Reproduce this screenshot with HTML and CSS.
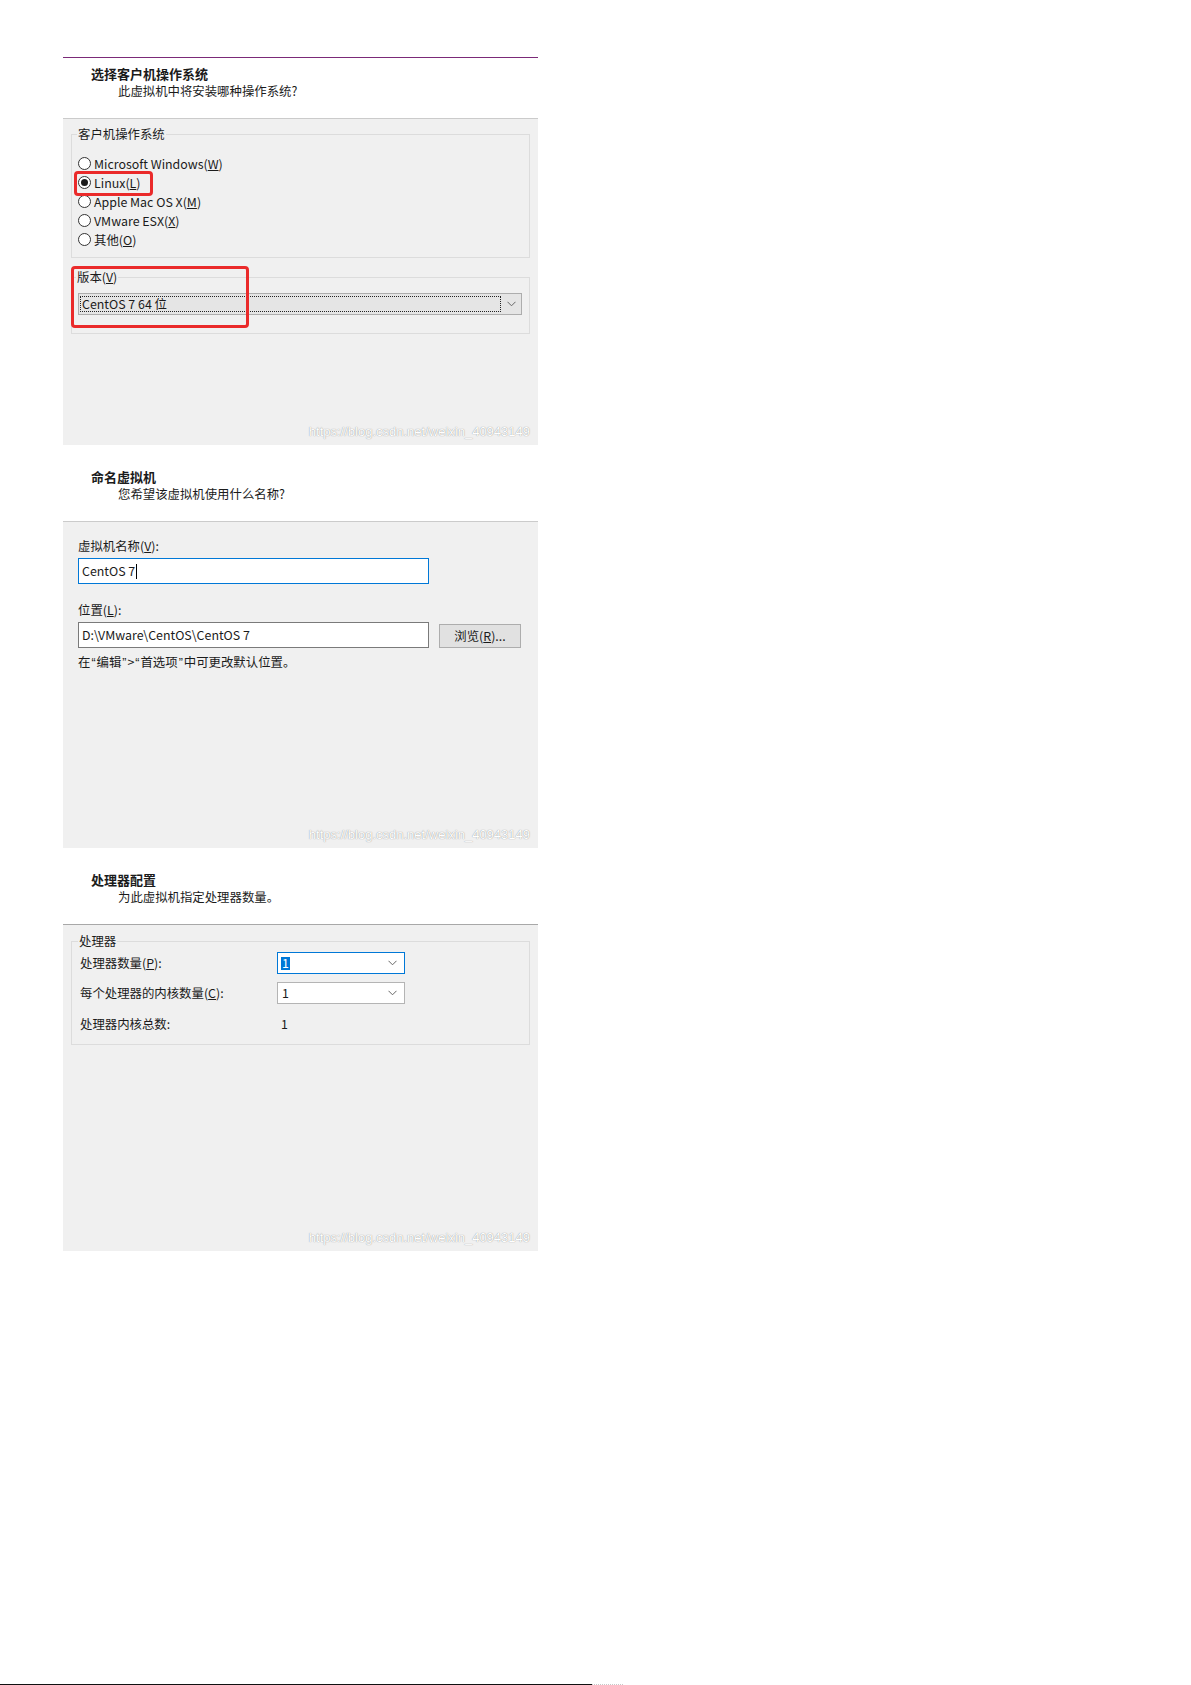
FILE: index.html
```html
<!DOCTYPE html>
<html>
    <head>
        <meta charset="utf-8">
        <meta name="viewport" content="width=device-width, initial-scale=1">
        <title>新建虚拟机向导</title>
        <link rel="stylesheet" href="styles.css">
    </head>
    <body>
        <div class="wizard">
            <!-- step 1: guest os -->
            <div class="head head-first">
                <h2>选择客户机操作系统</h2>
                <p>此虚拟机中将安装哪种操作系统?</p>
            </div>
            <div class="panel">
                <fieldset class="group os-group">
                    <legend>客户机操作系统</legend>
                    <label class="opt"><span class="radio"></span>Microsoft Windows(<u>W</u>)</label>
                    <label class="opt opt-marked"><span class="radio on"></span>Linux(<u>L</u>)<span class="mark mark-linux"></span></label>
                    <label class="opt"><span class="radio"></span>Apple Mac OS X(<u>M</u>)</label>
                    <label class="opt"><span class="radio"></span>VMware ESX(<u>X</u>)</label>
                    <label class="opt"><span class="radio"></span>其他(<u>O</u>)</label>
                </fieldset>
                <fieldset class="group version-group">
                    <legend>版本(<u>V</u>)<span class="mark mark-version"></span></legend>
                    <div class="combo">
                        <span class="combo-text">CentOS 7 64 位</span>
                        <span class="combo-arrow">
                            <svg width="9" height="6" viewBox="0 0 9 6"><path d="M0.5 0.8 L4.5 4.8 L8.5 0.8" fill="none" stroke="#666" stroke-width="1"/></svg>
                        </span>
                    </div>
                </fieldset>
                <div class="watermark">https://blog.csdn.net/weixin_40943149</div>
            </div>

            <!-- step 2: name -->
            <div class="head">
                <h2>命名虚拟机</h2>
                <p>您希望该虚拟机使用什么名称?</p>
            </div>
            <div class="panel panel-name">
                <div class="field-label">虚拟机名称(<u>V</u>):</div>
                <div class="textbox focus">CentOS 7<span class="caret"></span></div>
                <div class="field-label gap">位置(<u>L</u>):</div>
                <div class="path-row">
                    <div class="textbox">D:\VMware\CentOS\CentOS 7</div>
                    <button class="btn">浏览(<u>R</u>)...</button>
                </div>
                <div class="hint">在<span class="q">“</span>编辑<span class="q">”</span>&gt;<span class="q">“</span>首选项<span class="q">”</span>中可更改默认位置。</div>
                <div class="watermark">https://blog.csdn.net/weixin_40943149</div>
            </div>

            <!-- step 3: cpu -->
            <div class="head">
                <h2>处理器配置</h2>
                <p>为此虚拟机指定处理器数量。</p>
            </div>
            <div class="panel panel-cpu">
                <fieldset class="group cpu-group">
                    <legend>处理器</legend>
                    <div class="cpu-grid">
                        <span class="cpu-label">处理器数量(<u>P</u>):</span>
                        <div class="dropdown focus">
                            <span class="sel">1</span>
                            <svg width="9" height="6" viewBox="0 0 9 6"><path d="M0.5 0.8 L4.5 4.8 L8.5 0.8" fill="none" stroke="#666" stroke-width="1"/></svg>
                        </div>
                        <span class="cpu-label">每个处理器的内核数量(<u>C</u>):</span>
                        <div class="dropdown">
                            <span>1</span>
                            <svg width="9" height="6" viewBox="0 0 9 6"><path d="M0.5 0.8 L4.5 4.8 L8.5 0.8" fill="none" stroke="#666" stroke-width="1"/></svg>
                        </div>
                        <span class="cpu-label last">处理器内核总数:</span>
                        <span class="cpu-value last">1</span>
                    </div>
                </fieldset>
                <div class="watermark">https://blog.csdn.net/weixin_40943149</div>
            </div>
        </div>

        <div class="footer">
            <span class="footer-solid"></span>
            <span class="footer-dots"></span>
        </div>
    </body>
</html>
```

FILE: styles.css
```css
body {
    margin: 0;
    background-color: #fff;
    font-family: "Noto Sans CJK SC", "Noto Sans", sans-serif;
    font-size: 12.4px;
    color: #1b1b1b;
}

.wizard {
    width: 475px;
    margin: 57px 0 0 63px;
}

/* white header above each page of the wizard */
.head {
    height: 76px;
    box-sizing: border-box;
    padding: 23px 0 0 28px;
    background-color: #fff;
}

.head-first {
    height: 61px;
    padding-top: 7px;
    border-top: 1px solid #7b2a78;
}

.head h2 {
    margin: 0;
    font-size: 13px;
    font-weight: 700;
    line-height: 17px;
}

.head p {
    margin: 1px 0 0 27px;
    line-height: 17px;
}

.panel {
    height: 327px;
    box-sizing: border-box;
    display: flex;
    flex-direction: column;
    padding: 5px 8px 0 8px;
    background-color: #f0f0f0;
    border-top: 1px solid #cbcbcb;
}

.panel-name {
    padding: 16px 8px 0 15px;
}

.panel-cpu {
    padding-top: 6px;
    border-top-color: #a8a8a8;
}

/* group boxes */
.group {
    margin: 0;
    border: 1px solid #dcdcdc;
    border-radius: 0;
    min-width: 0;
}

.group legend {
    padding: 0 1px;
    line-height: 20px;
}

.os-group {
    padding: 10px 7px 8px 6px;
}

.os-group legend {
    margin-left: -1px;
}

.version-group {
    margin-top: 9px;
    padding: 6px 7px 18px 6px;
}

.version-group legend {
    position: relative;
    margin-left: -2px;
}

.cpu-group {
    padding: 1px 7px 11px 6px;
}

/* radio buttons */
.opt {
    display: flex;
    align-items: center;
    height: 19px;
}

.opt-marked {
    position: relative;
}

.radio {
    width: 13px;
    height: 13px;
    box-sizing: border-box;
    margin-right: 3px;
    border: 1px solid #333;
    border-radius: 50%;
    background-color: #fff;
    display: flex;
    align-items: center;
    justify-content: center;
}

.radio.on::after {
    content: "";
    width: 7px;
    height: 7px;
    border-radius: 50%;
    background-color: #1b1b1b;
}

/* red annotation boxes */
.mark {
    position: absolute;
    box-sizing: border-box;
    border: 3px solid #ea2a2a;
    border-radius: 4px;
}

.mark-linux {
    left: -4px;
    top: -2px;
    width: 79px;
    height: 25px;
}

.mark-version {
    left: -5.5px;
    top: -1.5px;
    width: 178px;
    height: 62px;
}

/* combo box */
.combo {
    height: 22px;
    box-sizing: border-box;
    display: flex;
    border: 1px solid #adadad;
    background-color: #e5e5e5;
}

.combo-text {
    flex: 1;
    margin: 2px 0 2px 1px;
    padding-left: 1px;
    border: 1px dotted #222;
    line-height: 14px;
}

.combo-arrow {
    width: 20px;
    display: flex;
    align-items: center;
    justify-content: center;
}

/* text fields */
.field-label {
    line-height: 17px;
}

.field-label.gap {
    margin-top: 18px;
}

.textbox {
    width: 351px;
    height: 26px;
    box-sizing: border-box;
    margin-top: 3px;
    padding-left: 3px;
    border: 1px solid #7a7a7a;
    background-color: #fff;
    line-height: 24px;
}

.textbox.focus {
    border-color: #0078d7;
}

.caret {
    display: inline-block;
    width: 1px;
    height: 15px;
    margin-left: 1px;
    vertical-align: -3px;
    background-color: #000;
}

.path-row {
    display: flex;
    align-items: center;
}

.btn {
    width: 82px;
    height: 24px;
    margin: 4px 0 0 10px;
    padding: 0;
    border: 1px solid #adadad;
    background-color: #e1e1e1;
    font: inherit;
    color: inherit;
}

.hint {
    margin-top: 6px;
    line-height: 17px;
}

/* narrow quotes like the windows ui font */
.hint .q {
    font-family: "Liberation Sans", sans-serif;
    padding: 0 1px;
}

/* processor settings */
.cpu-grid {
    display: grid;
    grid-template-columns: 199px 128px;
    grid-template-rows: 22px 22px 21px;
    row-gap: 8px;
    align-items: center;
}

.cpu-label {
    padding-left: 2px;
    line-height: 17px;
}

.cpu-value {
    padding-left: 4px;
    line-height: 17px;
}

.last {
    align-self: end;
}

.dropdown {
    height: 22px;
    box-sizing: border-box;
    display: flex;
    align-items: center;
    justify-content: space-between;
    padding: 0 7px 0 4px;
    border: 1px solid #b4b4b4;
    background-color: #fff;
}

.dropdown.focus {
    border-color: #0078d7;
}

.sel {
    background-color: #0078d7;
    color: #fff;
    line-height: 13px;
    padding: 0 1px;
    margin-left: -1px;
}

/* csdn watermark */
.watermark {
    margin-top: auto;
    align-self: flex-end;
    padding-bottom: 5px;
    font-family: "Liberation Sans", sans-serif;
    font-size: 13px;
    line-height: 16px;
    color: #fff;
    text-shadow: 0 0 1px rgba(0, 0, 0, 0.5);
}

.footer {
    display: flex;
    margin-top: 433px;
    height: 1px;
}

.footer-solid {
    width: 592px;
    background-color: #111;
}

.footer-dots {
    width: 31px;
    border-top: 1px dotted #c8c8c8;
}
```
